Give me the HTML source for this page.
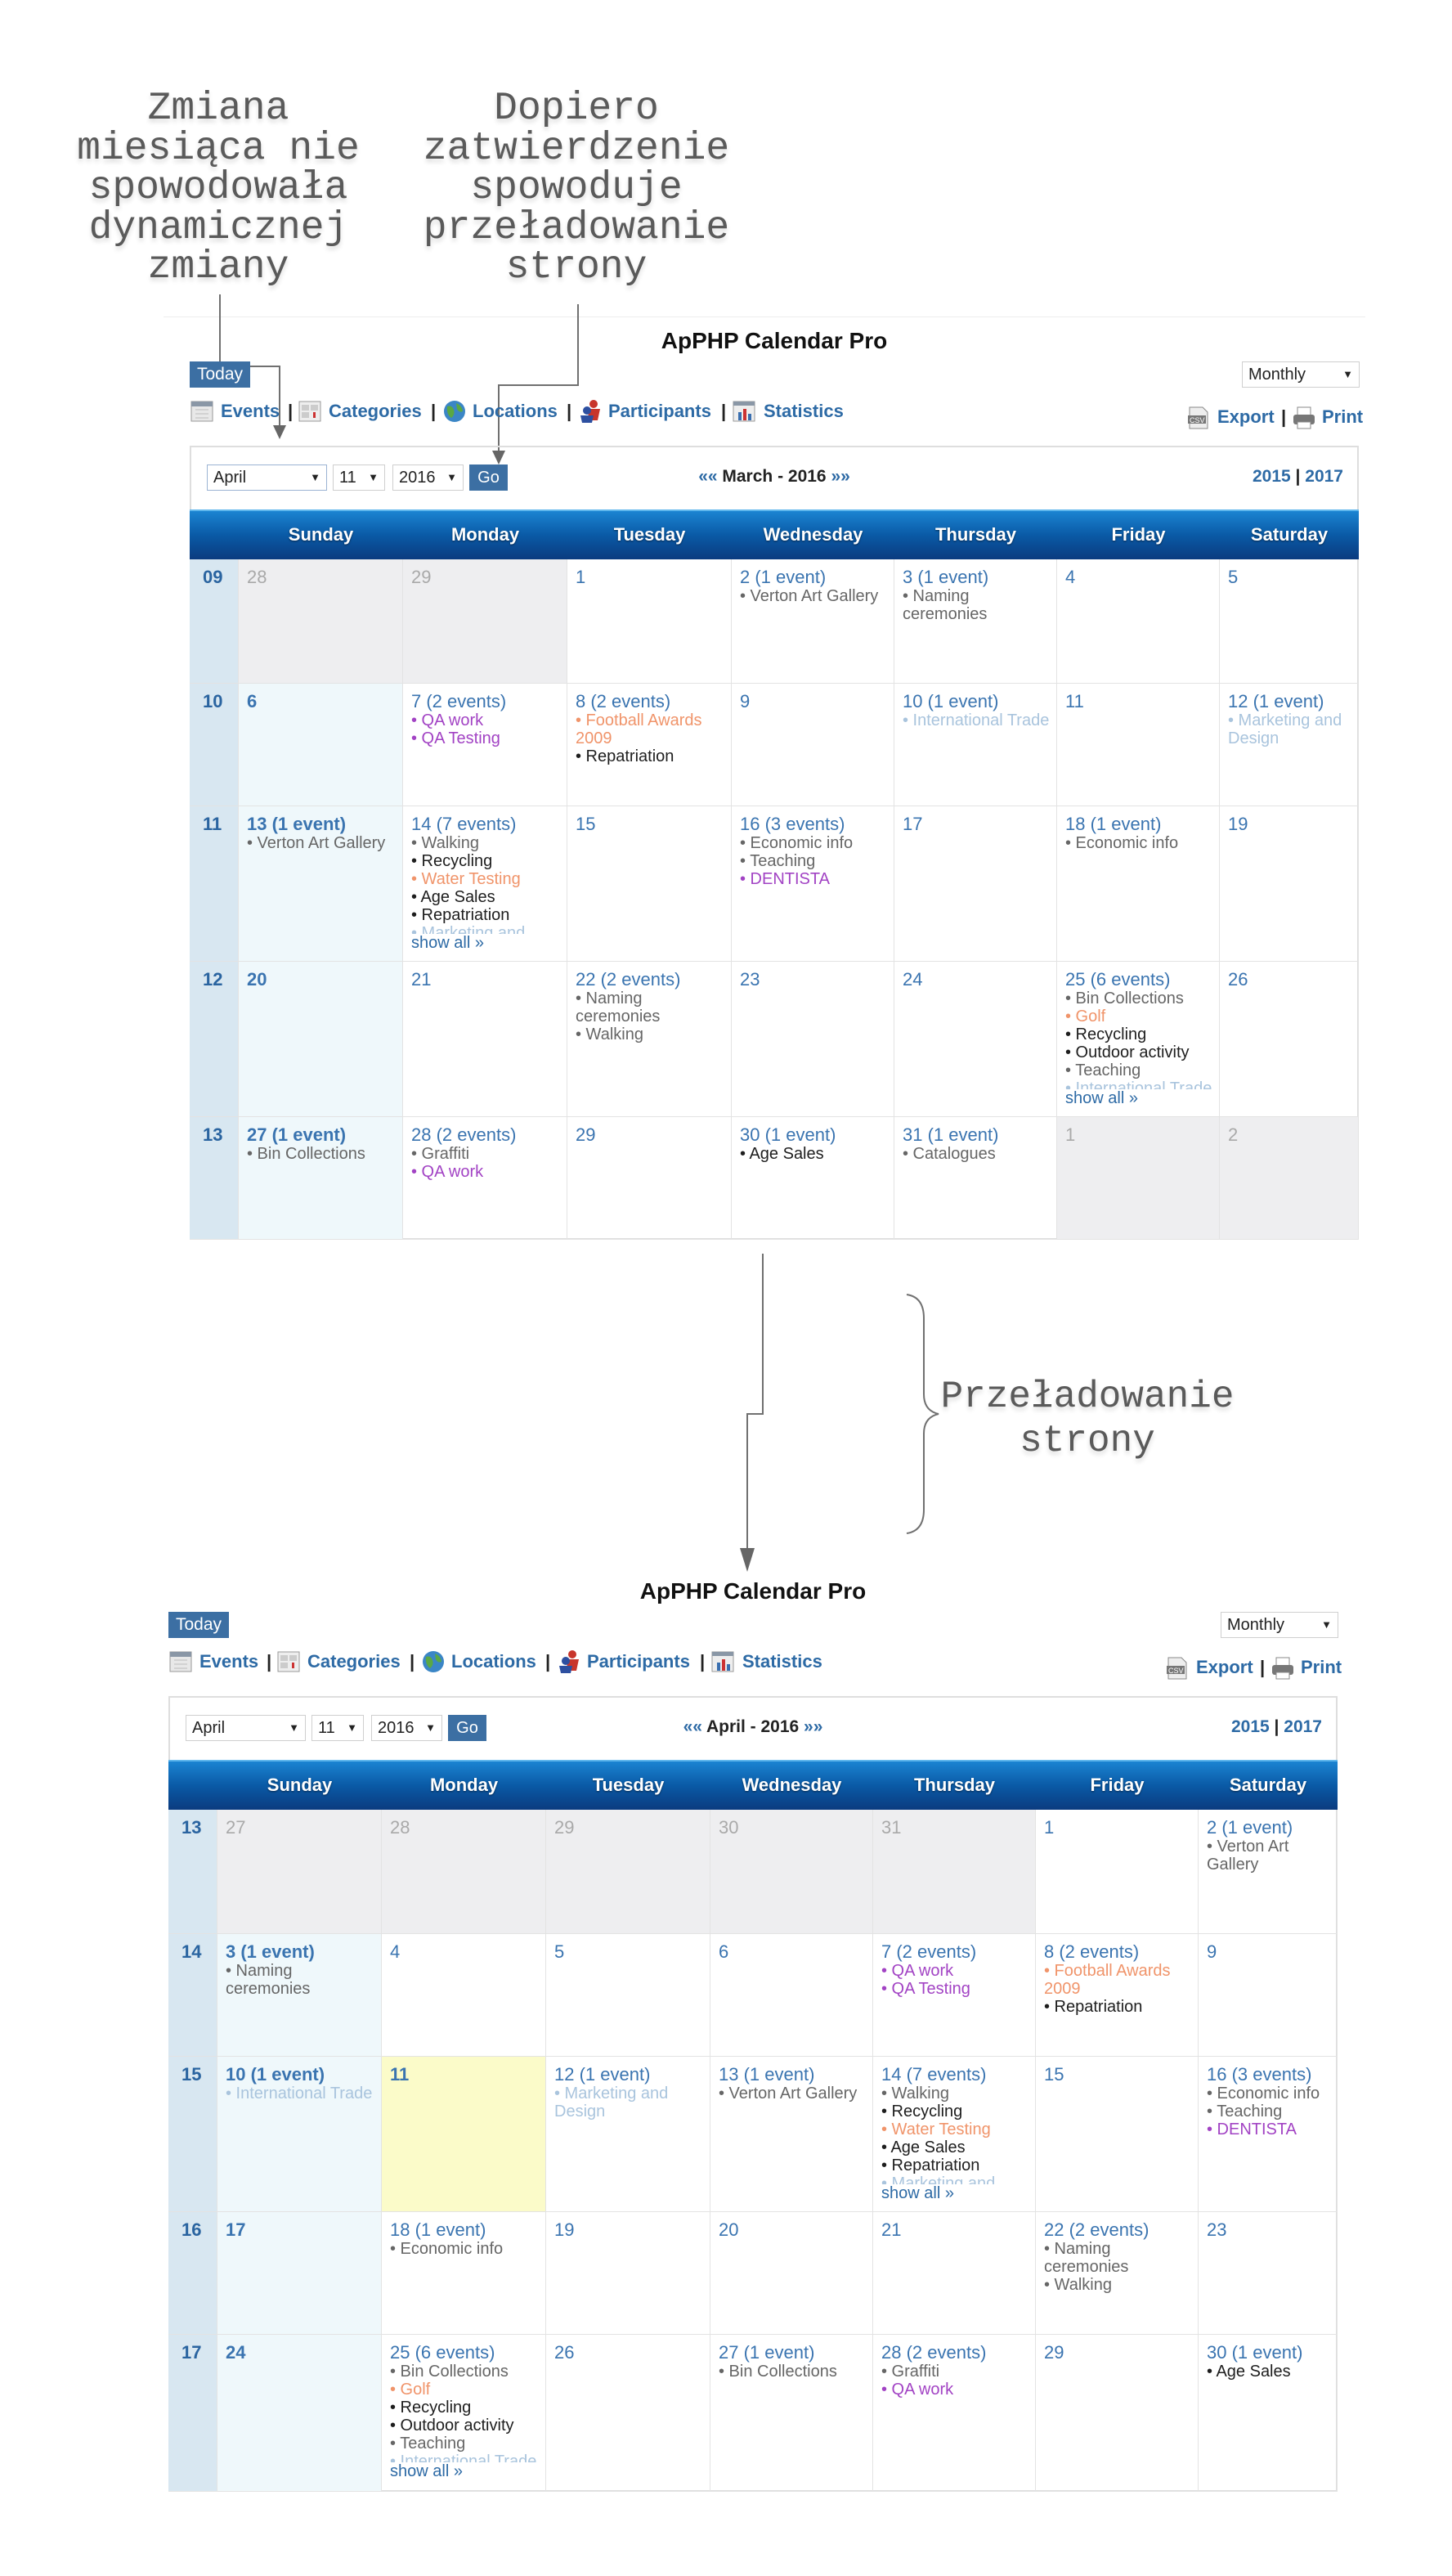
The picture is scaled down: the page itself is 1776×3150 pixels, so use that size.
<!DOCTYPE html>
<html><head><meta charset="utf-8">
<style>
*{margin:0;padding:0;box-sizing:border-box}
body{width:1776px;height:3150px;background:#fff;position:relative;overflow:hidden;font-family:"Liberation Sans",sans-serif}
.ann{position:absolute;font-family:"Liberation Mono",monospace;font-size:48px;line-height:48.5px;color:#5a5a5a;text-align:center;white-space:pre;text-shadow:0 4px 6px rgba(0,0,0,.14)}
.cal{position:absolute;width:1430px;height:1128px}
.title{position:absolute;top:12px;left:0;width:1430px;text-align:center;font-weight:bold;font-size:28px;line-height:34px;color:#111}
.today{position:absolute;left:0;top:54px;width:74px;height:32px;background:#3c6fa3;color:#fff;font-size:21px;line-height:32px;text-align:center}
.sel{position:absolute;border:1px solid #cfcfcf;background:#fff;color:#222;font-size:20px;line-height:30px;padding-left:7px}
.sel .ar{position:absolute;right:7px;top:0;font-size:13px}
.nv{position:absolute;top:101px;height:28px;font-weight:bold;font-size:22px;line-height:28px;color:#2d6aa5;white-space:nowrap}
.sp{color:#222}
.ic{position:absolute;top:100px}
.box{position:absolute;left:0;top:157px;width:1430px;border:2px solid #dedede}
.go{position:absolute;background:#3c6fa3;color:#fff;font-size:20px;line-height:32px;text-align:center}
.mt{position:absolute;top:181px;left:0;width:1430px;text-align:center;font-weight:bold;font-size:21px;line-height:28px;color:#222}
.mt b{color:#2d6aa5}
.yr{position:absolute;top:181px;right:19px;font-weight:bold;font-size:21px;line-height:28px;color:#2d6aa5}
.hd{position:absolute;left:0;top:235px;width:1430px;height:61px;background:linear-gradient(#1b84d2,#0a5aa6 50%,#0b3b7f);border-top:2px solid #5fb6ec;display:grid;grid-template-columns:60px 201px 201px 201px 199px 199px 199px 170px}
.hd div{color:#fff;font-weight:bold;font-size:22px;line-height:58px;text-align:center;text-shadow:0 1px 2px rgba(0,0,0,.5)}
.gr{position:absolute;left:0;top:296px;width:1430px;display:grid;grid-template-columns:60px 201px 201px 201px 199px 199px 199px 170px}
.gr>div{border-right:1px solid #e3e3e3;border-bottom:1px solid #e3e3e3;padding:10px 8px 0 10px;overflow:hidden;font-size:22px;line-height:24px;color:#3a74b0;position:relative}
.gr>.wk{background:#d8e7f1;font-weight:bold;color:#2a64a0;padding-left:16px}
.gr>.su{background:#eff8fb;font-weight:bold}
.gr>.ot{background:#eeeef0;color:#a9a9a9;font-weight:normal}
.gr>.td{background:#fbfbc9}
.ev{font-size:20px;line-height:22px;font-weight:normal;color:#666}
.ev.k{color:#1e1e1e}.ev.o{color:#f0946a}.ev.p{color:#a243c4}.ev.l{color:#a9c4dd}
.clip{height:122px;overflow:hidden}
.sa{font-size:20px;line-height:22px;color:#2d6aa5;font-weight:normal}
</style></head><body>

<div style="position:absolute;left:200px;top:387px;width:1470px;height:1px;background:#eee"></div>

<div class="ann" style="left:67px;top:109px;width:400px">Zmiana
miesiąca nie
spowodowała
dynamicznej
zmiany</div>
<div class="ann" style="left:505px;top:109px;width:400px">Dopiero
zatwierdzenie
spowoduje
przeładowanie
strony</div>
<div class="ann" style="left:1130px;top:1681px;width:400px;font-size:46px;line-height:54px">Przeładowanie
strony</div>

<svg style="position:absolute;left:0;top:0" width="1776" height="3150">
<g fill="none" stroke="#707070" stroke-width="2">
<path d="M269 360V448H342V522"/>
<path d="M707 372V471H610V553"/>
<path d="M933 1533V1729H914V1895"/>
<path d="M1109 1583Q1130 1586 1130 1612V1705Q1130 1725 1148 1729Q1130 1733 1130 1753V1846Q1130 1872 1109 1875"/>
</g>
<g fill="#666">
<path d="M334 520H350L342 537Z"/>
<path d="M602 551H618L610 568Z"/>
<path d="M905 1893H923L914 1922Z"/>
</g>
</svg>

<!-- TOP CALENDAR -->
<div class="cal" style="left:232px;top:388px">
<div class="title">ApPHP Calendar Pro</div>
<div class="today">Today</div>
<div class="sel" style="left:1287px;top:54px;width:144px;height:32px">Monthly<span class="ar">▼</span></div>
<svg class="ic" style="left:1px" width="30" height="30"><rect x="1" y="3" width="26" height="24" fill="#e8e8e8" stroke="#999"/><rect x="1" y="3" width="26" height="6" fill="#8a97a6"/><path d="M6 13h16M6 18h16M6 23h16" stroke="#bbb"/></svg>
<span class="nv" style="left:38px">Events</span><span class="nv sp" style="left:120px">|</span>
<svg class="ic" style="left:133px" width="30" height="30"><rect x="1" y="3" width="26" height="24" fill="#eee" stroke="#999"/><rect x="4" y="7" width="9" height="7" fill="#ccc"/><rect x="15" y="7" width="9" height="7" fill="#ccc"/><rect x="4" y="16" width="9" height="7" fill="#ccc"/><rect x="18" y="16" width="3" height="7" fill="#c33"/></svg>
<span class="nv" style="left:170px">Categories</span><span class="nv sp" style="left:295px">|</span>
<svg class="ic" style="left:309px" width="30" height="30"><circle cx="15" cy="15" r="13" fill="#3b86c6"/><path d="M6 9q6 -2 8 4t-3 10q-6 -4 -5 -14zM17 5q7 3 8 10q-5 2 -7 -3z" fill="#5aa844"/></svg>
<span class="nv" style="left:346px">Locations</span><span class="nv sp" style="left:461px">|</span>
<svg class="ic" style="left:476px" width="30" height="30"><circle cx="18" cy="6" r="5" fill="#c8352b"/><path d="M10 12h16l-3 14h-10z" fill="#c8352b"/><circle cx="10" cy="14" r="5" fill="#2d4fa0"/><path d="M2 20h16l-2 9h-12z" fill="#2d4fa0"/></svg>
<span class="nv" style="left:512px">Participants</span><span class="nv sp" style="left:650px">|</span>
<svg class="ic" style="left:664px" width="30" height="30"><rect x="1" y="3" width="26" height="24" fill="#eee" stroke="#999"/><rect x="1" y="3" width="26" height="5" fill="#8a97a6"/><rect x="7" y="16" width="4" height="10" fill="#3a6fb0"/><rect x="13" y="12" width="4" height="14" fill="#c33"/><rect x="19" y="18" width="4" height="8" fill="#3a6fb0"/></svg>
<span class="nv" style="left:702px">Statistics</span>
<svg class="ic" style="left:1219px;top:108px" width="30" height="30"><path d="M4 2h16l6 6v20H4z" fill="#eee" stroke="#888"/><rect x="2" y="12" width="22" height="10" fill="#777"/><text x="4" y="21" font-size="9" fill="#fff" font-family="Liberation Sans">CSV</text></svg>
<span class="nv" style="left:1257px;top:108px">Export</span><span class="nv sp" style="left:1335px;top:108px">|</span>
<svg class="ic" style="left:1348px;top:108px" width="30" height="30"><rect x="7" y="2" width="16" height="10" fill="#fff" stroke="#888"/><rect x="2" y="11" width="26" height="12" rx="3" fill="#777"/><rect x="7" y="20" width="16" height="8" fill="#fff" stroke="#888"/></svg>
<span class="nv" style="left:1385px;top:108px">Print</span>
<div class="box" style="height:971px"></div>
<div class="sel" style="left:21px;top:180px;width:147px;height:32px;border-color:#9bb3d3">April<span class="ar">▼</span></div>
<div class="sel" style="left:175px;top:180px;width:64px;height:32px">11<span class="ar">▼</span></div>
<div class="sel" style="left:248px;top:180px;width:87px;height:32px">2016<span class="ar">▼</span></div>
<div class="go" style="left:342px;top:180px;width:47px;height:32px">Go</div>
<div class="mt"><b>««</b> March - 2016 <b>»»</b></div>
<div class="yr">2015 <span class="sp">|</span> 2017</div>
<div class="hd"><div></div><div>Sunday</div><div>Monday</div><div>Tuesday</div><div>Wednesday</div><div>Thursday</div><div>Friday</div><div>Saturday</div></div>
<div class="gr" style="grid-template-rows:152px 150px 190px 190px 150px">
<div class="wk">09</div><div class="su ot">28</div><div class="ot">29</div><div>1</div>
<div>2 (1 event)<div class="ev">• Verton Art Gallery</div></div>
<div>3 (1 event)<div class="ev">• Naming ceremonies</div></div><div>4</div><div>5</div>

<div class="wk">10</div><div class="su">6</div>
<div>7 (2 events)<div class="ev p">• QA work</div><div class="ev p">• QA Testing</div></div>
<div>8 (2 events)<div class="ev o">• Football Awards 2009</div><div class="ev k">• Repatriation</div></div>
<div>9</div>
<div>10 (1 event)<div class="ev l">• International Trade</div></div>
<div>11</div>
<div>12 (1 event)<div class="ev l">• Marketing and Design</div></div>

<div class="wk">11</div>
<div class="su">13 (1 event)<div class="ev">• Verton Art Gallery</div></div>
<div>14 (7 events)<div class="clip"><div class="ev">• Walking</div><div class="ev k">• Recycling</div><div class="ev o">• Water Testing</div><div class="ev k">• Age Sales</div><div class="ev k">• Repatriation</div><div class="ev l">• Marketing and</div></div><div class="sa">show all »</div></div>
<div>15</div>
<div>16 (3 events)<div class="ev">• Economic info</div><div class="ev">• Teaching</div><div class="ev p">• DENTISTA</div></div>
<div>17</div>
<div>18 (1 event)<div class="ev">• Economic info</div></div>
<div>19</div>

<div class="wk">12</div><div class="su">20</div><div>21</div>
<div>22 (2 events)<div class="ev">• Naming ceremonies</div><div class="ev">• Walking</div></div>
<div>23</div><div>24</div>
<div>25 (6 events)<div class="clip"><div class="ev">• Bin Collections</div><div class="ev o">• Golf</div><div class="ev k">• Recycling</div><div class="ev k">• Outdoor activity</div><div class="ev">• Teaching</div><div class="ev l">• International Trade</div></div><div class="sa">show all »</div></div>
<div>26</div>

<div class="wk">13</div>
<div class="su">27 (1 event)<div class="ev">• Bin Collections</div></div>
<div>28 (2 events)<div class="ev">• Graffiti</div><div class="ev p">• QA work</div></div>
<div>29</div>
<div>30 (1 event)<div class="ev k">• Age Sales</div></div>
<div>31 (1 event)<div class="ev">• Catalogues</div></div>
<div class="ot">1</div><div class="ot">2</div>
</div>
</div>

<!-- BOTTOM CALENDAR -->
<div class="cal" style="left:206px;top:1917px">
<div class="title">ApPHP Calendar Pro</div>
<div class="today">Today</div>
<div class="sel" style="left:1287px;top:54px;width:144px;height:32px">Monthly<span class="ar">▼</span></div>
<svg class="ic" style="left:1px" width="30" height="30"><rect x="1" y="3" width="26" height="24" fill="#e8e8e8" stroke="#999"/><rect x="1" y="3" width="26" height="6" fill="#8a97a6"/><path d="M6 13h16M6 18h16M6 23h16" stroke="#bbb"/></svg>
<span class="nv" style="left:38px">Events</span><span class="nv sp" style="left:120px">|</span>
<svg class="ic" style="left:133px" width="30" height="30"><rect x="1" y="3" width="26" height="24" fill="#eee" stroke="#999"/><rect x="4" y="7" width="9" height="7" fill="#ccc"/><rect x="15" y="7" width="9" height="7" fill="#ccc"/><rect x="4" y="16" width="9" height="7" fill="#ccc"/><rect x="18" y="16" width="3" height="7" fill="#c33"/></svg>
<span class="nv" style="left:170px">Categories</span><span class="nv sp" style="left:295px">|</span>
<svg class="ic" style="left:309px" width="30" height="30"><circle cx="15" cy="15" r="13" fill="#3b86c6"/><path d="M6 9q6 -2 8 4t-3 10q-6 -4 -5 -14zM17 5q7 3 8 10q-5 2 -7 -3z" fill="#5aa844"/></svg>
<span class="nv" style="left:346px">Locations</span><span class="nv sp" style="left:461px">|</span>
<svg class="ic" style="left:476px" width="30" height="30"><circle cx="18" cy="6" r="5" fill="#c8352b"/><path d="M10 12h16l-3 14h-10z" fill="#c8352b"/><circle cx="10" cy="14" r="5" fill="#2d4fa0"/><path d="M2 20h16l-2 9h-12z" fill="#2d4fa0"/></svg>
<span class="nv" style="left:512px">Participants</span><span class="nv sp" style="left:650px">|</span>
<svg class="ic" style="left:664px" width="30" height="30"><rect x="1" y="3" width="26" height="24" fill="#eee" stroke="#999"/><rect x="1" y="3" width="26" height="5" fill="#8a97a6"/><rect x="7" y="16" width="4" height="10" fill="#3a6fb0"/><rect x="13" y="12" width="4" height="14" fill="#c33"/><rect x="19" y="18" width="4" height="8" fill="#3a6fb0"/></svg>
<span class="nv" style="left:702px">Statistics</span>
<svg class="ic" style="left:1219px;top:108px" width="30" height="30"><path d="M4 2h16l6 6v20H4z" fill="#eee" stroke="#888"/><rect x="2" y="12" width="22" height="10" fill="#777"/><text x="4" y="21" font-size="9" fill="#fff" font-family="Liberation Sans">CSV</text></svg>
<span class="nv" style="left:1257px;top:108px">Export</span><span class="nv sp" style="left:1335px;top:108px">|</span>
<svg class="ic" style="left:1348px;top:108px" width="30" height="30"><rect x="7" y="2" width="16" height="10" fill="#fff" stroke="#888"/><rect x="2" y="11" width="26" height="12" rx="3" fill="#777"/><rect x="7" y="20" width="16" height="8" fill="#fff" stroke="#888"/></svg>
<span class="nv" style="left:1385px;top:108px">Print</span>
<div class="box" style="height:973px"></div>
<div class="sel" style="left:21px;top:180px;width:147px;height:32px">April<span class="ar">▼</span></div>
<div class="sel" style="left:175px;top:180px;width:64px;height:32px">11<span class="ar">▼</span></div>
<div class="sel" style="left:248px;top:180px;width:87px;height:32px">2016<span class="ar">▼</span></div>
<div class="go" style="left:342px;top:180px;width:47px;height:32px">Go</div>
<div class="mt"><b>««</b> April - 2016 <b>»»</b></div>
<div class="yr">2015 <span class="sp">|</span> 2017</div>
<div class="hd"><div></div><div>Sunday</div><div>Monday</div><div>Tuesday</div><div>Wednesday</div><div>Thursday</div><div>Friday</div><div>Saturday</div></div>
<div class="gr" style="grid-template-rows:152px 150px 190px 150px 192px">
<div class="wk">13</div><div class="su ot">27</div><div class="ot">28</div><div class="ot">29</div><div class="ot">30</div><div class="ot">31</div><div>1</div>
<div>2 (1 event)<div class="ev">• Verton Art Gallery</div></div>

<div class="wk">14</div>
<div class="su">3 (1 event)<div class="ev">• Naming ceremonies</div></div>
<div>4</div><div>5</div><div>6</div>
<div>7 (2 events)<div class="ev p">• QA work</div><div class="ev p">• QA Testing</div></div>
<div>8 (2 events)<div class="ev o">• Football Awards 2009</div><div class="ev k">• Repatriation</div></div>
<div>9</div>

<div class="wk">15</div>
<div class="su">10 (1 event)<div class="ev l">• International Trade</div></div>
<div class="td" style="font-weight:bold">11</div>
<div>12 (1 event)<div class="ev l">• Marketing and Design</div></div>
<div>13 (1 event)<div class="ev">• Verton Art Gallery</div></div>
<div>14 (7 events)<div class="clip"><div class="ev">• Walking</div><div class="ev k">• Recycling</div><div class="ev o">• Water Testing</div><div class="ev k">• Age Sales</div><div class="ev k">• Repatriation</div><div class="ev l">• Marketing and</div></div><div class="sa">show all »</div></div>
<div>15</div>
<div>16 (3 events)<div class="ev">• Economic info</div><div class="ev">• Teaching</div><div class="ev p">• DENTISTA</div></div>

<div class="wk">16</div><div class="su">17</div>
<div>18 (1 event)<div class="ev">• Economic info</div></div>
<div>19</div><div>20</div><div>21</div>
<div>22 (2 events)<div class="ev">• Naming ceremonies</div><div class="ev">• Walking</div></div>
<div>23</div>

<div class="wk">17</div><div class="su">24</div>
<div>25 (6 events)<div class="clip"><div class="ev">• Bin Collections</div><div class="ev o">• Golf</div><div class="ev k">• Recycling</div><div class="ev k">• Outdoor activity</div><div class="ev">• Teaching</div><div class="ev l">• International Trade</div></div><div class="sa">show all »</div></div>
<div>26</div>
<div>27 (1 event)<div class="ev">• Bin Collections</div></div>
<div>28 (2 events)<div class="ev">• Graffiti</div><div class="ev p">• QA work</div></div>
<div>29</div>
<div>30 (1 event)<div class="ev k">• Age Sales</div></div>
</div>
</div>
</body></html>
